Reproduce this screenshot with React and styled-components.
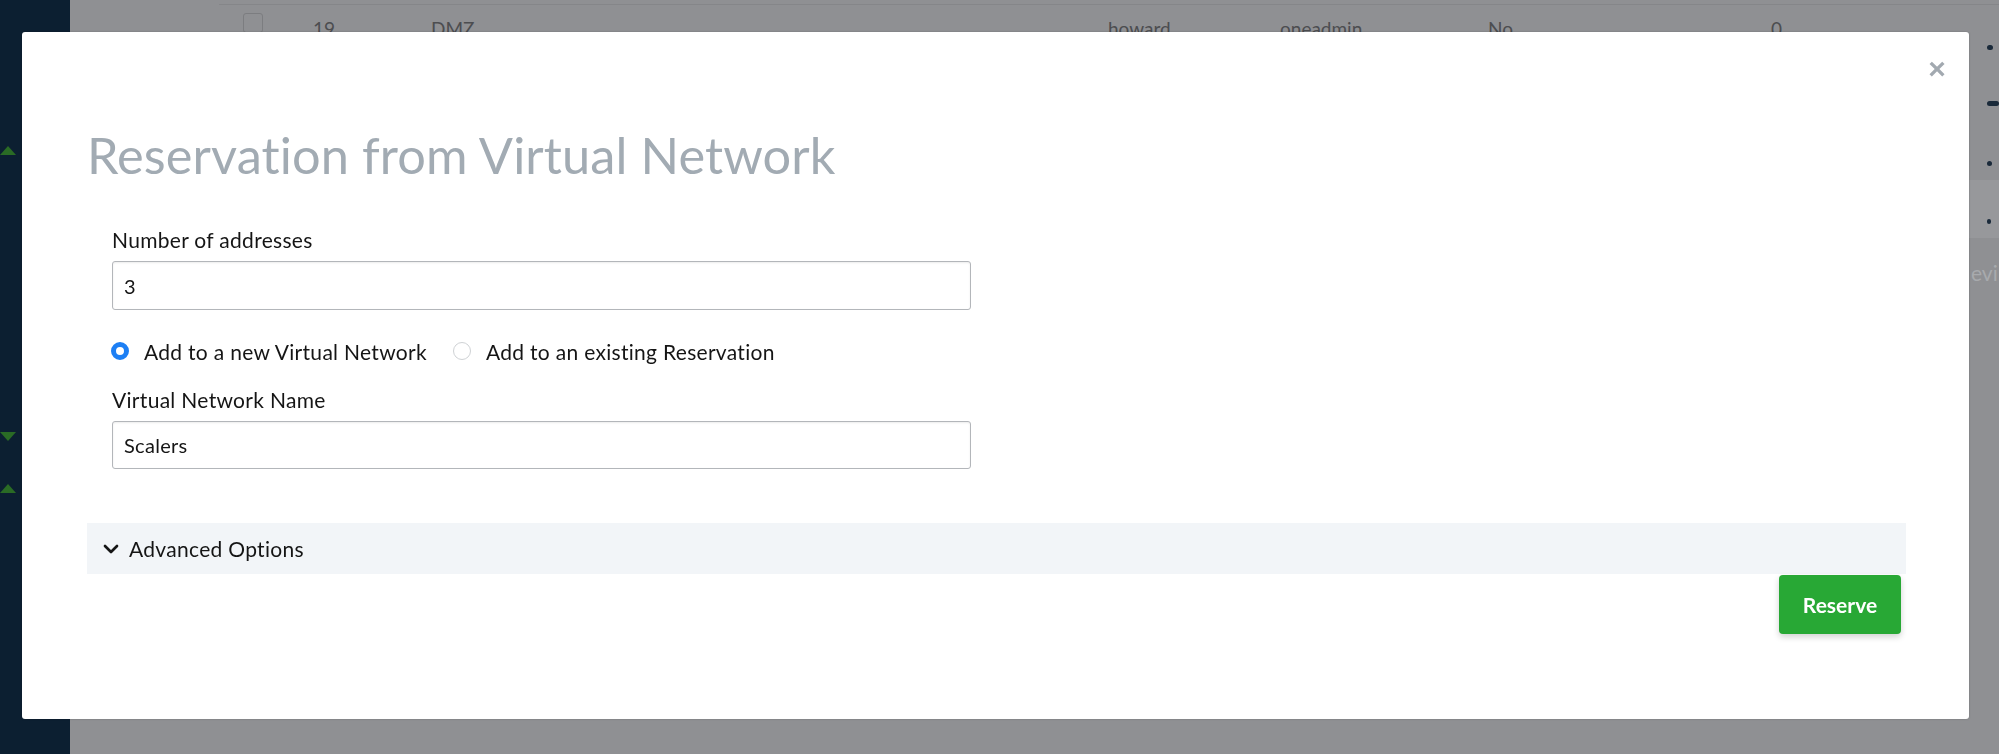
import React from "react";
import styled, { createGlobalStyle } from "styled-components";

const GlobalStyle = createGlobalStyle`
  html, body {
    margin: 0;
    padding: 0;
    height: 754px;
    overflow: hidden;
    background: #8f9093;
    font-family: "Lato", "Liberation Sans", sans-serif;
  }
  * { box-sizing: border-box; }
`;

const Page = styled.div`
  display: flex;
  width: 1999px;
  height: 754px;
`;

const Sidebar = styled.div`
  width: 70px;
  flex-shrink: 0;
  background: #0c1f31;
  display: flex;
  flex-direction: column;
  padding-top: 146px;
`;

const Arrow = styled.div`
  width: 0;
  height: 0;
  border-left: 8px solid transparent;
  border-right: 8px solid transparent;
  ${(p) =>
    p.$down
      ? "border-top: 9px solid #2a6b25;"
      : "border-bottom: 9px solid #2a6b25;"}
  margin-top: ${(p) => p.$gap || 0}px;
`;

const Content = styled.div`
  flex: 1;
  display: flex;
`;

const Main = styled.div`
  flex: 1;
  padding-left: 149px;
`;

const TableRow = styled.div`
  margin-top: 4px;
  border-top: 1px solid #858689;
  display: flex;
  align-items: flex-start;
  height: 50px;
  padding-left: 24px;
  color: #4c4d50;
  font-size: 19px;
  line-height: 24px;
`;

const Check = styled.span`
  width: 20px;
  height: 20px;
  margin-top: 8px;
  border: 1px solid #7c7d80;
  border-radius: 3px;
  margin-right: 50px;
  flex-shrink: 0;
`;

const Cell = styled.span`
  width: ${(p) => p.$w}px;
  flex-shrink: 0;
  padding-top: 12px;
`;

const RightStrip = styled.div`
  width: 30px;
  flex-shrink: 0;
  padding-top: 17px;
  display: flex;
  flex-direction: column;
  border-top: 1px solid #858689;
  margin-top: 4px;
`;

const Mark = styled.div`
  height: ${(p) => p.$h || 58}px;
  padding-top: ${(p) => p.$pad || 0}px;
  display: flex;
  align-items: center;
  padding-left: 18px;
  background: ${(p) => (p.$band ? "#97989b" : "transparent")};
  &::before {
    content: "";
    width: ${(p) => p.$w || 6}px;
    height: 5px;
    border-radius: 3px;
    background: #1a2a3a;
  }
`;

const Tail = styled.div`
  padding: 22px 0 0 2px;
  font-size: 21px;
  color: #a8aaad;
`;

const Overlay = styled.div`
  position: fixed;
  left: 22px;
  top: 32px;
  width: 1947px;
  height: 687px;
  background: #ffffff;
  border-radius: 3px;
  box-shadow: 0 0 2px rgba(0, 0, 0, 0.25);
  padding: 92px 63px 0 65px;
`;

const Close = styled.button`
  position: absolute;
  top: 20px;
  right: 20px;
  width: 24px;
  height: 34px;
  border: none;
  background: none;
  padding: 0;
  color: #a2a9b0;
  font-family: "Liberation Sans", sans-serif;
  font-size: 30px;
  font-weight: 700;
  line-height: 34px;
  cursor: pointer;
`;

const Title = styled.h2`
  margin: 0;
  font-size: 50.5px;
  font-weight: 400;
  line-height: 62px;
  color: #a2abb3;
  letter-spacing: 0.1px;
`;

const Form = styled.div`
  width: 884px;
  padding-left: 25px;
  margin-top: 42px;
  display: flex;
  flex-direction: column;
`;

const Label = styled.label`
  font-size: 21px;
  letter-spacing: 0.3px;
  line-height: 24px;
  color: #151515;
`;

const Input = styled.input`
  margin-top: 9px;
  height: ${(p) => p.$h || 49}px;
  width: 100%;
  border: 1px solid #b3b6ba;
  border-radius: 3px;
  box-shadow: inset 0 1px 2px rgba(0, 0, 0, 0.08);
  padding: 0 11px;
  font-family: inherit;
  font-size: 20px;
  letter-spacing: 0.3px;
  color: #151515;
  outline: none;
`;

const RadioRow = styled.div`
  margin-top: 29px;
  margin-bottom: 25px;
  display: flex;
  align-items: center;
  height: 24px;
`;

const RadioItem = styled.label`
  display: flex;
  align-items: center;
  gap: 15px;
  margin-left: ${(p) => (p.$first ? 0 : 27)}px;
  font-size: 21px;
  letter-spacing: 0.3px;
  color: #151515;
`;

const Dot = styled.span`
  width: 18px;
  height: 18px;
  border-radius: 50%;
  margin-left: -1px;
  ${(p) =>
    p.$on
      ? "border: 5px solid #1d7ff4; background: #fff;"
      : "border: 1px solid #cfd2d5; background: #fff;"}
`;

const Advanced = styled.div`
  margin-top: 54px;
  height: 51px;
  background: #f2f5f8;
  display: flex;
  align-items: center;
  padding-left: 15px;
  gap: 9px;
  font-size: 21px;
  letter-spacing: 0.3px;
  color: #151515;
`;

const Footer = styled.div`
  display: flex;
  justify-content: flex-end;
  padding-right: 5px;
  margin-top: 1px;
`;

const Reserve = styled.button`
  width: 122px;
  height: 59px;
  border: none;
  border-radius: 4px;
  background: #28a835;
  color: #fff;
  font-family: inherit;
  font-size: 21px;
  font-weight: 700;
  box-shadow: 0 3px 6px rgba(0, 0, 0, 0.18);
  cursor: pointer;
`;

const Chevron = () => (
  <svg width="18" height="18" viewBox="0 0 24 24" fill="none">
    <path d="M4 8l8 8 8-8" stroke="#151515" strokeWidth="3.6" strokeLinecap="round" strokeLinejoin="round" />
  </svg>
);

export default function App() {
  return (
    <>
      <GlobalStyle />
      <Page>
        <Sidebar>
          <Arrow />
          <Arrow $down $gap={277} />
          <Arrow $gap={43} />
        </Sidebar>
        <Content>
          <Main>
            <TableRow>
              <Check />
              <Cell $w={118}>19</Cell>
              <Cell $w={677}>DMZ</Cell>
              <Cell $w={172}>howard</Cell>
              <Cell $w={208}>oneadmin</Cell>
              <Cell $w={283}>No</Cell>
              <Cell $w={60}>0</Cell>
            </TableRow>
          </Main>
          <RightStrip>
            <Mark $h={50} />
            <Mark $h={62} $w={12} />
            <Mark $h={46} $pad={12} $w={5} />
            <Mark $h={58} $pad={24} $w={4} $band />
            <Tail>evi</Tail>
          </RightStrip>
        </Content>
      </Page>
      <Overlay>
        <Close aria-label="Close">×</Close>
        <Title>Reservation from Virtual Network</Title>
        <Form>
          <Label>Number of addresses</Label>
          <Input defaultValue="3" />
          <RadioRow>
            <RadioItem $first>
              <Dot $on />
              Add to a new Virtual Network
            </RadioItem>
            <RadioItem>
              <Dot />
              Add to an existing Reservation
            </RadioItem>
          </RadioRow>
          <Label>Virtual Network Name</Label>
          <Input $h={48} defaultValue="Scalers" />
        </Form>
        <Advanced>
          <Chevron />
          Advanced Options
        </Advanced>
        <Footer>
          <Reserve>Reserve</Reserve>
        </Footer>
      </Overlay>
    </>
  );
}
